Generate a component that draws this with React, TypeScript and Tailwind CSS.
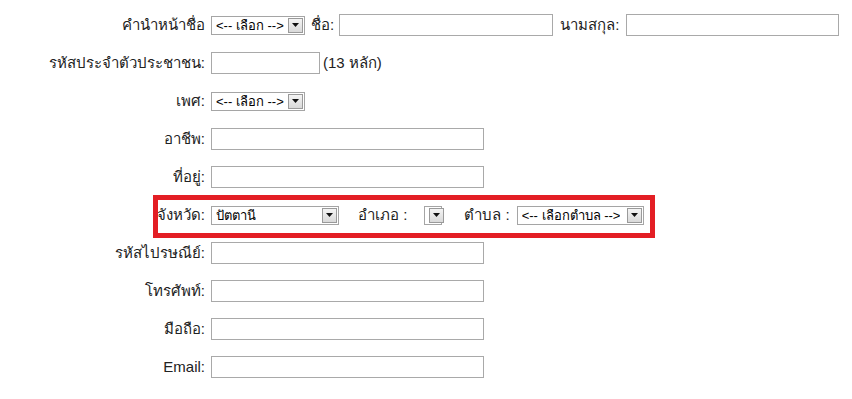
import type { ReactNode } from "react";

const FONT = "font-['Liberation_Sans','Tahoma','DejaVu_Sans','Noto_Sans',sans-serif]";

const Arrow = () => (
    <span className="flex h-[15px] w-[15px] shrink-0 items-center justify-center border border-[#9a9a9a] bg-gradient-to-b from-[#f4f4f4] to-[#d9d9d9]">
        <svg width="7" height="4" viewBox="0 0 7 4">
            <path d="M0 0h7L3.5 4z" fill="#111" />
        </svg>
    </span>
);

const Select = ({ value, width }: { value?: string; width: string }) => (
    <div
        className={`${width} flex h-[19px] items-center justify-between border border-[#a5a5a5] bg-white pl-[4px] pr-[1px] text-[13px] text-black`}
    >
        <span className="truncate leading-none">{value}</span>
        <Arrow />
    </div>
);

const Input = ({ width }: { width: string }) => (
    <div className={`${width} h-[22px] border border-[#a9a9a9] bg-white`} />
);

const Row = ({
    label,
    children,
    extra = "",
}: {
    label: string;
    children?: ReactNode;
    extra?: string;
}) => (
    <div className={`flex h-[38px] items-center ${extra}`}>
        <div className="w-[205px] shrink-0 text-right">{label}</div>
        <div className="ml-[6px] flex items-center">{children}</div>
    </div>
);

export default function App() {
    return (
        <div
            className={`${FONT} h-[399px] w-[852px] overflow-hidden bg-white pt-[6px] text-[15px] text-[#222]`}
        >
            <Row label="คำนำหน้าชื่อ">
                <Select value="<-- เลือก -->" width="w-[94px]" />
                <span className="ml-[6px] mr-[5px]">ชื่อ:</span>
                <Input width="w-[214px]" />
                <span className="ml-[7px] mr-[7px]">นามสกุล:</span>
                <Input width="w-[213px]" />
            </Row>
            <Row label="รหัสประจำตัวประชาชน:">
                <Input width="w-[109px]" />
                <span className="ml-[3px]">(13 หลัก)</span>
            </Row>
            <Row label="เพศ:">
                <Select value="<-- เลือก -->" width="w-[94px]" />
            </Row>
            <Row label="อาชีพ:">
                <Input width="w-[273px]" />
            </Row>
            <Row label="ที่อยู่:">
                <Input width="w-[273px]" />
            </Row>
            <Row label="จังหวัด:" extra="relative">
                <Select value="ปัตตานี" width="w-[128px]" />
                <span className="ml-[19px] mr-[17px]">อำเภอ :</span>
                <Select width="w-[18px]" />
                <span className="ml-[22px] mr-[7px]">ตำบล :</span>
                <Select value="<-- เลือกตำบล -->" width="w-[127px]" />
                <div className="pointer-events-none absolute left-[153px] top-[-1px] h-[43px] w-[502px] border-[5px] border-[#e31e24]" />
            </Row>
            <Row label="รหัสไปรษณีย์:">
                <Input width="w-[273px]" />
            </Row>
            <Row label="โทรศัพท์:">
                <Input width="w-[273px]" />
            </Row>
            <Row label="มือถือ:">
                <Input width="w-[273px]" />
            </Row>
            <Row label="Email:">
                <Input width="w-[273px]" />
            </Row>
        </div>
    );
}
